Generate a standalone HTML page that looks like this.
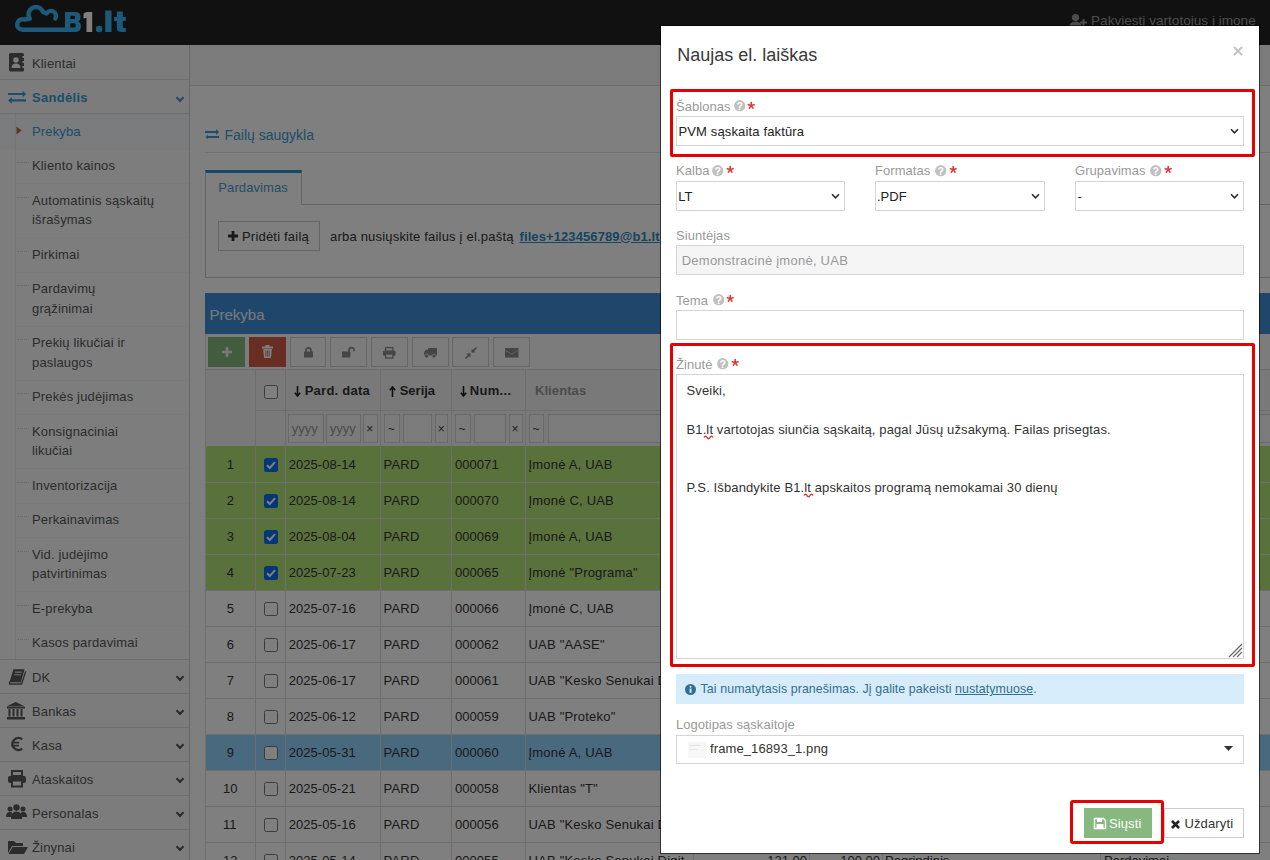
<!DOCTYPE html><html><head><meta charset="utf-8"><title>B1</title><style>
*{box-sizing:border-box;margin:0;padding:0}
html,body{width:1270px;height:860px;overflow:hidden}
body{position:relative;font-family:"Liberation Sans",sans-serif;font-size:13px;color:#393939;background:#fff}
.abs{position:absolute}
.t{position:absolute;white-space:nowrap;line-height:1}
svg{position:absolute;overflow:visible}
#page{position:absolute;left:0;top:0;width:1270px;height:860px;background:#fff;overflow:hidden}
#backdrop{position:absolute;left:0;top:0;width:1270px;height:860px;background:rgba(0,0,0,.5)}
#modal{position:absolute;left:660px;top:25px;width:600px;height:829px;background:#fff;background-clip:padding-box;border:1px solid rgba(0,0,0,.6)}
.q{position:absolute;width:11px;height:11px;border-radius:50%;background:#c2c2c2}
.q:after{content:"?";position:absolute;left:0;top:1px;width:11px;text-align:center;font-size:9px;line-height:9px;font-weight:bold;color:#fff}
.inp{position:absolute;border:1px solid #d5d5d5;background:#fff}
</style></head><body>
<div id="page">
<div class="abs" style="left:0.00px;top:0.00px;width:1270.00px;height:45.00px;background:#222"></div>
<svg style="left:0;top:0" width="140" height="45"><path d="M55.33 18.5 A5 5 0 0 0 46.67 13.5 L43.05 11.93 A7.5 7.5 0 1 0 29.86 18.8 L24.31 19.52 A5.3 5.3 0 1 0 22.5 29.8 L67 29.8" fill="none" stroke="#3ab2f0" stroke-width="4.4" stroke-linecap="round" stroke-linejoin="round"/><path fill-rule="evenodd" fill="#3ab2f0" d="M65 12 H75 Q80.6 12 80.6 17 Q80.6 20.3 78.2 21.6 Q81 22.8 81 26.6 Q81 32 75.4 32 H65 Z M70.4 15.8 H73.6 Q75.2 15.8 75.2 17.4 Q75.2 19 73.6 19 H70.4 Z M70.4 23.2 H74 Q75.8 23.2 75.8 25.4 Q75.8 27.6 74 27.6 H70.4 Z"/><path fill="#fff" d="M86.5 12 H92.2 V32 H86.5 V17.8 L83.5 18.6 V13.6 Z"/><circle cx="99.1" cy="29" r="3.3" fill="#3ab2f0"/><rect x="105.2" y="10.5" width="6.3" height="21.5" fill="#3ab2f0"/><path fill="#3ab2f0" d="M116.8 11.6 H122.8 V16.9 H125.9 V21 H122.8 V26.8 Q122.8 28 124.2 28 H125.9 V32 H121.5 Q116.8 32 116.8 27.5 V21 H114 V16.9 H116.8 Z"/></svg>
<svg style="left:1069px;top:13px" width="18" height="16"><circle cx="6.5" cy="4.5" r="3.6" fill="#999"/><path d="M0 15 Q0 8.5 6.5 8.5 Q13 8.5 13 15Z" fill="#999"/><path d="M14.5 6v7M11 9.5h7" stroke="#999" stroke-width="2"/></svg>
<div class="t" style="left:1091.00px;top:14.09px;font-size:13.6px;color:#9a9a9a;font-weight:normal;">Pakviesti vartotojus į įmonę</div>
<div class="abs" style="left:0.00px;top:45.00px;width:190.00px;height:815.00px;background:#f8f8f8;border-right:1px solid #cfcfcf"></div>
<svg style="left:9px;top:53px" width="16" height="19"><rect x="0" y="0" width="15" height="18.5" rx="1.5" fill="#585858"/><rect x="13.5" y="3" width="2.5" height="2" fill="#f8f8f8"/><rect x="13.5" y="8" width="2.5" height="2" fill="#f8f8f8"/><rect x="13.5" y="13" width="2.5" height="2" fill="#f8f8f8"/><circle cx="7" cy="7" r="2.8" fill="#f8f8f8"/><path d="M2.5 15 Q2.5 10.5 7 10.5 Q11.5 10.5 11.5 15Z" fill="#f8f8f8"/></svg>
<div class="t" style="left:32.00px;top:56.80px;font-size:13px;color:#585858;font-weight:normal;letter-spacing:0.15px">Klientai</div>
<div class="abs" style="left:0.00px;top:79.00px;width:189.00px;height:1.00px;background:#dedede"></div>
<div class="abs" style="left:0.00px;top:80.00px;width:189.00px;height:33.00px;background:#f8f8f8"></div>
<svg style="left:8px;top:90px" width="19" height="15"><path fill="#3a9ad4" d="M0 2.9H14.6V0.7L18.1 4L14.6 7.3V4.9H0Z M18 9.3H3.8V7L0.1 10.4L3.8 13.8V11.5H18Z"/></svg>
<div class="t" style="left:32.00px;top:90.60px;font-size:13px;color:#3a9ad4;font-weight:bold;letter-spacing:0.3px">Sandėlis</div>
<div class="abs" style="left:176.5px;top:94.5px;width:6px;height:6px;border-right:2px solid #3a9ad4;border-bottom:2px solid #3a9ad4;transform:rotate(45deg)"></div>
<div class="abs" style="left:0.00px;top:113.00px;width:189.00px;height:1.00px;background:#dedede"></div>
<div class="abs" style="left:0.00px;top:114.00px;width:189.00px;height:545.00px;background:#fbfbfb"></div>
<div class="abs" style="left:0.00px;top:114.00px;width:189.00px;height:34.50px;background:#f4f7fa"></div>
<div class="t" style="left:32px;top:124.95px;font-size:13px;line-height:19.5px;color:#3a9ad4;letter-spacing:0.15px;top:121.70px">Prekyba</div>
<div class="abs" style="left:16.00px;top:148.50px;width:173.00px;height:1.00px;background:#f4f4f4"></div>
<div class="abs" style="left:17px;top:162.15px;width:12px;height:0;border-top:1px dotted #d0d0d0"></div>
<div class="t" style="left:32px;top:159.45px;font-size:13px;line-height:19.5px;color:#585858;letter-spacing:0.15px;top:156.20px">Kliento kainos</div>
<div class="abs" style="left:16.00px;top:183.00px;width:173.00px;height:1.00px;background:#f4f4f4"></div>
<div class="abs" style="left:17px;top:196.80px;width:12px;height:0;border-top:1px dotted #d0d0d0"></div>
<div class="t" style="left:32px;top:194.10px;font-size:13px;line-height:19.5px;color:#585858;letter-spacing:0.15px;top:190.85px">Automatinis sąskaitų<br>išrašymas</div>
<div class="abs" style="left:16.00px;top:237.00px;width:173.00px;height:1.00px;background:#f4f4f4"></div>
<div class="abs" style="left:17px;top:250.65px;width:12px;height:0;border-top:1px dotted #d0d0d0"></div>
<div class="t" style="left:32px;top:247.95px;font-size:13px;line-height:19.5px;color:#585858;letter-spacing:0.15px;top:244.70px">Pirkimai</div>
<div class="abs" style="left:16.00px;top:271.50px;width:173.00px;height:1.00px;background:#f4f4f4"></div>
<div class="abs" style="left:17px;top:285.30px;width:12px;height:0;border-top:1px dotted #d0d0d0"></div>
<div class="t" style="left:32px;top:282.60px;font-size:13px;line-height:19.5px;color:#585858;letter-spacing:0.15px;top:279.35px">Pardavimų<br>grąžinimai</div>
<div class="abs" style="left:16.00px;top:325.50px;width:173.00px;height:1.00px;background:#f4f4f4"></div>
<div class="abs" style="left:17px;top:339.30px;width:12px;height:0;border-top:1px dotted #d0d0d0"></div>
<div class="t" style="left:32px;top:336.60px;font-size:13px;line-height:19.5px;color:#585858;letter-spacing:0.15px;top:333.35px">Prekių likučiai ir<br>paslaugos</div>
<div class="abs" style="left:16.00px;top:379.50px;width:173.00px;height:1.00px;background:#f4f4f4"></div>
<div class="abs" style="left:17px;top:393.15px;width:12px;height:0;border-top:1px dotted #d0d0d0"></div>
<div class="t" style="left:32px;top:390.45px;font-size:13px;line-height:19.5px;color:#585858;letter-spacing:0.15px;top:387.20px">Prekės judėjimas</div>
<div class="abs" style="left:16.00px;top:414.00px;width:173.00px;height:1.00px;background:#f4f4f4"></div>
<div class="abs" style="left:17px;top:427.80px;width:12px;height:0;border-top:1px dotted #d0d0d0"></div>
<div class="t" style="left:32px;top:425.10px;font-size:13px;line-height:19.5px;color:#585858;letter-spacing:0.15px;top:421.85px">Konsignaciniai<br>likučiai</div>
<div class="abs" style="left:16.00px;top:468.00px;width:173.00px;height:1.00px;background:#f4f4f4"></div>
<div class="abs" style="left:17px;top:481.65px;width:12px;height:0;border-top:1px dotted #d0d0d0"></div>
<div class="t" style="left:32px;top:478.95px;font-size:13px;line-height:19.5px;color:#585858;letter-spacing:0.15px;top:475.70px">Inventorizacija</div>
<div class="abs" style="left:16.00px;top:502.50px;width:173.00px;height:1.00px;background:#f4f4f4"></div>
<div class="abs" style="left:17px;top:516.15px;width:12px;height:0;border-top:1px dotted #d0d0d0"></div>
<div class="t" style="left:32px;top:513.45px;font-size:13px;line-height:19.5px;color:#585858;letter-spacing:0.15px;top:510.20px">Perkainavimas</div>
<div class="abs" style="left:16.00px;top:537.00px;width:173.00px;height:1.00px;background:#f4f4f4"></div>
<div class="abs" style="left:17px;top:550.80px;width:12px;height:0;border-top:1px dotted #d0d0d0"></div>
<div class="t" style="left:32px;top:548.10px;font-size:13px;line-height:19.5px;color:#585858;letter-spacing:0.15px;top:544.85px">Vid. judėjimo<br>patvirtinimas</div>
<div class="abs" style="left:16.00px;top:591.00px;width:173.00px;height:1.00px;background:#f4f4f4"></div>
<div class="abs" style="left:17px;top:604.65px;width:12px;height:0;border-top:1px dotted #d0d0d0"></div>
<div class="t" style="left:32px;top:601.95px;font-size:13px;line-height:19.5px;color:#585858;letter-spacing:0.15px;top:598.70px">E-prekyba</div>
<div class="abs" style="left:16.00px;top:625.50px;width:173.00px;height:1.00px;background:#f4f4f4"></div>
<div class="abs" style="left:17px;top:639.15px;width:12px;height:0;border-top:1px dotted #d0d0d0"></div>
<div class="t" style="left:32px;top:636.45px;font-size:13px;line-height:19.5px;color:#585858;letter-spacing:0.15px;top:633.20px">Kasos pardavimai</div>
<div class="abs" style="left:15px;top:114px;width:0;height:545px;border-left:1px dotted #d3e2ec"></div>
<svg style="left:16px;top:126px" width="6" height="9"><path d="M0.5 0.5 L5.5 4.5 L0.5 8.5Z" fill="#c86139"/></svg>
<div class="abs" style="left:0.00px;top:659.00px;width:189.00px;height:1.00px;background:#dedede"></div>
<div class="t" style="left:32.00px;top:671.00px;font-size:13px;color:#585858;font-weight:normal;letter-spacing:0.15px">DK</div>
<div class="abs" style="left:177px;top:673.80px;width:6px;height:6px;border-right:2px solid #555;border-bottom:2px solid #555;transform:rotate(45deg)"></div>
<div class="abs" style="left:0.00px;top:693.00px;width:189.00px;height:1.00px;background:#dedede"></div>
<div class="t" style="left:32.00px;top:705.00px;font-size:13px;color:#585858;font-weight:normal;letter-spacing:0.15px">Bankas</div>
<div class="abs" style="left:177px;top:707.80px;width:6px;height:6px;border-right:2px solid #555;border-bottom:2px solid #555;transform:rotate(45deg)"></div>
<div class="abs" style="left:0.00px;top:727.00px;width:189.00px;height:1.00px;background:#dedede"></div>
<div class="t" style="left:32.00px;top:739.00px;font-size:13px;color:#585858;font-weight:normal;letter-spacing:0.15px">Kasa</div>
<div class="abs" style="left:177px;top:741.80px;width:6px;height:6px;border-right:2px solid #555;border-bottom:2px solid #555;transform:rotate(45deg)"></div>
<div class="abs" style="left:0.00px;top:761.00px;width:189.00px;height:1.00px;background:#dedede"></div>
<div class="t" style="left:32.00px;top:773.00px;font-size:13px;color:#585858;font-weight:normal;letter-spacing:0.15px">Ataskaitos</div>
<div class="abs" style="left:177px;top:775.80px;width:6px;height:6px;border-right:2px solid #555;border-bottom:2px solid #555;transform:rotate(45deg)"></div>
<div class="abs" style="left:0.00px;top:795.00px;width:189.00px;height:1.00px;background:#dedede"></div>
<div class="t" style="left:32.00px;top:807.00px;font-size:13px;color:#585858;font-weight:normal;letter-spacing:0.15px">Personalas</div>
<div class="abs" style="left:177px;top:809.80px;width:6px;height:6px;border-right:2px solid #555;border-bottom:2px solid #555;transform:rotate(45deg)"></div>
<div class="abs" style="left:0.00px;top:829.00px;width:189.00px;height:1.00px;background:#dedede"></div>
<div class="t" style="left:32.00px;top:841.00px;font-size:13px;color:#585858;font-weight:normal;letter-spacing:0.15px">Žinynai</div>
<div class="abs" style="left:177px;top:843.80px;width:6px;height:6px;border-right:2px solid #555;border-bottom:2px solid #555;transform:rotate(45deg)"></div>
<div class="abs" style="left:0.00px;top:863.00px;width:189.00px;height:1.00px;background:#dedede"></div>
<svg style="left:9px;top:668.5px" width="18" height="16"><path d="M4.4 0.3H15.6L11.9 13.3H0.5Z" fill="#585858"/><path d="M0.6 12.6V15H12.6L16.7 2.4" fill="none" stroke="#585858" stroke-width="1.3"/><path d="M6 3.1H12.6M5.3 5.8H12" stroke="#f8f8f8" stroke-width="1.1" opacity="0.85"/></svg>
<svg style="left:6px;top:702px" width="20" height="18"><path d="M0.5 4.5 L9.75 0 L19 4.5Z" fill="#585858"/><rect x="1" y="5" width="18" height="1.5" fill="#585858"/><rect x="2.5" y="7" width="2" height="7.5" fill="#585858"/><rect x="6.5" y="7" width="2" height="7.5" fill="#585858"/><rect x="10.5" y="7" width="2" height="7.5" fill="#585858"/><rect x="14.5" y="7" width="2" height="7.5" fill="#585858"/><rect x="1" y="15" width="18" height="2.5" fill="#585858"/></svg>
<svg style="left:11px;top:735.5px" width="13" height="16"><path d="M11.2 3.3 A6 6 0 1 0 11.2 12.7" fill="none" stroke="#585858" stroke-width="2.3"/><path d="M0.3 6.6H8.3M0.3 9.6H7.8" stroke="#585858" stroke-width="1.7"/></svg>
<svg style="left:8px;top:771px" width="19" height="16"><rect x="4" y="0" width="10" height="5" fill="none" stroke="#585858" stroke-width="2"/><rect x="0" y="5" width="18" height="7" rx="2" fill="#585858"/><rect x="4" y="9.5" width="10" height="6" fill="#f8f8f8" stroke="#585858" stroke-width="2"/></svg>
<svg style="left:6px;top:804px" width="21" height="16"><circle cx="10.5" cy="3.5" r="3.2" fill="#585858"/><circle cx="4" cy="5" r="2.5" fill="#585858"/><circle cx="17" cy="5" r="2.5" fill="#585858"/><path d="M5 15 Q5 7.5 10.5 7.5 Q16 7.5 16 15Z" fill="#585858"/><path d="M0 13 Q0 8 4 8 Q6 8 6.5 9 L5 13Z" fill="#585858"/><path d="M21 13 Q21 8 17 8 Q15 8 14.5 9 L16 13Z" fill="#585858"/></svg>
<svg style="left:8px;top:840px" width="20" height="15"><path d="M0 1h6l2 2h7v3H4L0 13Z" fill="#585858"/><path d="M4.5 7H20L16 14H0.5Z" fill="#585858"/></svg>
<div class="abs" style="left:190.00px;top:45.00px;width:1080.00px;height:41.00px;background:#f6f6f6;border-bottom:1px solid #d9d9d9"></div>
<svg style="left:205px;top:129px" width="15" height="11"><path fill="#3a9ad4" d="M0 2.1H11.2V0L14 3L11.2 6V3.9H0Z M14 7.1H2.8V5.7L0.5 8L2.8 10.5V8.9H14Z"/></svg>
<div class="t" style="left:224.50px;top:128.15px;font-size:14px;color:#3a9ad4;font-weight:normal;">Failų saugykla</div>
<div class="abs" style="left:205.00px;top:152.00px;width:1065.00px;height:1.00px;background:#e2e2e2"></div>
<div class="abs" style="left:205.00px;top:170.00px;width:97.00px;height:35.00px;background:#fff;border:1px solid #c8c8c8;border-bottom:none;border-top:3px solid #2f8fc4"></div>
<div class="abs" style="left:205.00px;top:204.00px;width:1065.00px;height:74.00px;border:1px solid #c8c8c8;border-right:none"></div>
<div class="abs" style="left:206.00px;top:204.00px;width:95.00px;height:1.00px;background:#fff"></div>
<div class="t" style="left:218.30px;top:180.60px;font-size:13px;color:#4a9ccc;font-weight:normal;letter-spacing:0.1px">Pardavimas</div>
<div class="abs" style="left:218.00px;top:221.00px;width:102.00px;height:30.00px;background:#fff;border:1px solid #ccc"></div>
<svg style="left:228px;top:231px" width="10" height="10"><path d="M5 0v10M0 5h10" stroke="#333" stroke-width="2.8"/></svg>
<div class="t" style="left:242.00px;top:229.50px;font-size:13px;color:#333;font-weight:normal;letter-spacing:0.2px">Pridėti failą</div>
<div class="t" style="left:330.00px;top:229.50px;font-size:13px;color:#333;font-weight:normal;letter-spacing:0.2px">arba nusiųskite failus į el.paštą</div>
<div class="t" style="left:519.50px;top:229.50px;font-size:13px;color:#2e88bd;font-weight:bold;text-decoration:underline;letter-spacing:0.1px">files+123456789@b1.lt</div>
<div class="abs" style="left:205.00px;top:293.00px;width:1065.00px;height:41.00px;background:#3f8fd8"></div>
<div class="t" style="left:209.50px;top:306.70px;font-size:15px;color:#eef4fa;font-weight:normal;">Prekyba</div>
<div class="abs" style="left:205.00px;top:334.00px;width:1065.00px;height:35.00px;background:#f8f8f8;border-left:1px solid #ddd"></div>
<div class="abs" style="left:208.00px;top:337.00px;width:37.00px;height:30.00px;background:#87b87f"></div>
<div class="abs" style="left:249.00px;top:337.00px;width:36.50px;height:30.00px;background:#d15b47"></div>
<svg style="left:222px;top:347px" width="10" height="10"><path d="M5 0v10M0 5h10" stroke="#f0f0f0" stroke-width="2.6"/></svg>
<svg style="left:262px;top:345px" width="11" height="13"><rect x="0" y="1.5" width="11" height="2" fill="#fff"/><rect x="3.5" y="0" width="4" height="2" fill="#fff"/><path d="M1.2 4h8.6l-0.8 9h-7z" fill="#fff"/><path d="M3.8 5.5v6M5.5 5.5v6M7.2 5.5v6" stroke="#d15b47" stroke-width="0.8"/></svg>
<div class="abs" style="left:289.50px;top:337.00px;width:36.50px;height:30.00px;background:#f8f8f8;border:1px solid #ccc"></div>
<div class="abs" style="left:330.00px;top:337.00px;width:36.50px;height:30.00px;background:#f8f8f8;border:1px solid #ccc"></div>
<div class="abs" style="left:371.00px;top:337.00px;width:36.50px;height:30.00px;background:#f8f8f8;border:1px solid #ccc"></div>
<div class="abs" style="left:412.00px;top:337.00px;width:36.50px;height:30.00px;background:#f8f8f8;border:1px solid #ccc"></div>
<div class="abs" style="left:452.00px;top:337.00px;width:36.50px;height:30.00px;background:#f8f8f8;border:1px solid #ccc"></div>
<div class="abs" style="left:493.00px;top:337.00px;width:36.50px;height:30.00px;background:#f8f8f8;border:1px solid #ccc"></div>
<svg style="left:303.5px;top:346.5px" width="9" height="11"><path d="M2 5V3.3a2.5 2.5 0 0 1 5 0V5" fill="none" stroke="#8a8a8a" stroke-width="1.7"/><rect x="0" y="4.6" width="9" height="5.9" rx="0.6" fill="#8a8a8a"/></svg>
<svg style="left:342.3px;top:346.5px" width="13" height="11"><path d="M7 5V3.1a2.55 2.55 0 0 1 5.1 0V4.2" fill="none" stroke="#8a8a8a" stroke-width="1.7"/><rect x="0" y="4.6" width="8.4" height="5.9" rx="0.6" fill="#8a8a8a"/></svg>
<svg style="left:383.2px;top:346.6px" width="13" height="12"><rect x="2.6" y="0.6" width="7.3" height="3.6" fill="none" stroke="#8a8a8a" stroke-width="1.3"/><rect x="0" y="3.8" width="12.5" height="5" rx="1.2" fill="#8a8a8a"/><rect x="2.6" y="7" width="7.3" height="4" fill="#f8f8f8" stroke="#8a8a8a" stroke-width="1.3"/></svg>
<svg style="left:424px;top:347.5px" width="13" height="11"><rect x="4" y="0" width="9" height="7.5" fill="#8a8a8a"/><path d="M0 4.2 L1.8 1.8 H4.2 V7.5 H0Z" fill="#8a8a8a"/><circle cx="2.6" cy="8" r="2" fill="#8a8a8a" stroke="#f8f8f8" stroke-width="0.7"/><circle cx="10" cy="8" r="2" fill="#8a8a8a" stroke="#f8f8f8" stroke-width="0.7"/></svg>
<svg style="left:464.8px;top:346.6px" width="12" height="12"><path d="M11.5 0.5L7.2 4.8M0.5 11.5L4.8 7.2" stroke="#8a8a8a" stroke-width="1.7"/><path d="M6.6 1.4V5.4H10.6Z M5.4 10.6V6.6H1.4Z" fill="#8a8a8a"/></svg>
<svg style="left:504.7px;top:348px" width="14" height="10"><rect x="0" y="0" width="13.5" height="9.6" rx="0.5" fill="#8a8a8a"/><path d="M0.3 2.2 L6.75 6.2 L13.2 2.2" fill="none" stroke="#f8f8f8" stroke-width="0.9" opacity="0.6"/></svg>
<div class="abs" style="left:205.00px;top:369.00px;width:1065.00px;height:77.00px;background:#f2f2f2"></div>
<div class="abs" style="left:205.00px;top:369.00px;width:1065.00px;height:1.00px;background:#ddd"></div>
<div class="abs" style="left:255.00px;top:410.00px;width:1015.00px;height:1.00px;background:#ddd"></div>
<div class="abs" style="left:205.00px;top:446.00px;width:1065.00px;height:36.00px;background:#b2e479"></div>
<div class="t" style="left:226.70px;top:457.60px;font-size:13px;color:#333;font-weight:normal;">1</div>
<div class="t" style="left:288.70px;top:457.60px;font-size:13px;color:#333;font-weight:normal;letter-spacing:0.05px">2025-08-14</div>
<div class="t" style="left:383.60px;top:457.60px;font-size:13px;color:#333;font-weight:normal;letter-spacing:0.2px">PARD</div>
<div class="t" style="left:455.00px;top:457.60px;font-size:13px;color:#333;font-weight:normal;letter-spacing:0.05px">000071</div>
<div class="t" style="left:528.50px;top:457.60px;font-size:13px;color:#333;font-weight:normal;letter-spacing:0.2px">Įmonė A, UAB</div>
<svg style="left:264px;top:457.50px" width="14" height="14"><rect x="0" y="0" width="14" height="14" rx="2.5" fill="#0a6cf0"/><path d="M3 7.2 L5.8 10 L11 4.2" fill="none" stroke="#fff" stroke-width="2"/></svg>
<div class="abs" style="left:205.00px;top:482.00px;width:1065.00px;height:36.00px;background:#b2e479"></div>
<div class="t" style="left:226.70px;top:493.60px;font-size:13px;color:#333;font-weight:normal;">2</div>
<div class="t" style="left:288.70px;top:493.60px;font-size:13px;color:#333;font-weight:normal;letter-spacing:0.05px">2025-08-14</div>
<div class="t" style="left:383.60px;top:493.60px;font-size:13px;color:#333;font-weight:normal;letter-spacing:0.2px">PARD</div>
<div class="t" style="left:455.00px;top:493.60px;font-size:13px;color:#333;font-weight:normal;letter-spacing:0.05px">000070</div>
<div class="t" style="left:528.50px;top:493.60px;font-size:13px;color:#333;font-weight:normal;letter-spacing:0.2px">Įmonė C, UAB</div>
<svg style="left:264px;top:493.50px" width="14" height="14"><rect x="0" y="0" width="14" height="14" rx="2.5" fill="#0a6cf0"/><path d="M3 7.2 L5.8 10 L11 4.2" fill="none" stroke="#fff" stroke-width="2"/></svg>
<div class="abs" style="left:205.00px;top:518.00px;width:1065.00px;height:36.00px;background:#b2e479"></div>
<div class="t" style="left:226.70px;top:529.60px;font-size:13px;color:#333;font-weight:normal;">3</div>
<div class="t" style="left:288.70px;top:529.60px;font-size:13px;color:#333;font-weight:normal;letter-spacing:0.05px">2025-08-04</div>
<div class="t" style="left:383.60px;top:529.60px;font-size:13px;color:#333;font-weight:normal;letter-spacing:0.2px">PARD</div>
<div class="t" style="left:455.00px;top:529.60px;font-size:13px;color:#333;font-weight:normal;letter-spacing:0.05px">000069</div>
<div class="t" style="left:528.50px;top:529.60px;font-size:13px;color:#333;font-weight:normal;letter-spacing:0.2px">Įmonė A, UAB</div>
<svg style="left:264px;top:529.50px" width="14" height="14"><rect x="0" y="0" width="14" height="14" rx="2.5" fill="#0a6cf0"/><path d="M3 7.2 L5.8 10 L11 4.2" fill="none" stroke="#fff" stroke-width="2"/></svg>
<div class="abs" style="left:205.00px;top:554.00px;width:1065.00px;height:36.00px;background:#b2e479"></div>
<div class="t" style="left:226.70px;top:565.60px;font-size:13px;color:#333;font-weight:normal;">4</div>
<div class="t" style="left:288.70px;top:565.60px;font-size:13px;color:#333;font-weight:normal;letter-spacing:0.05px">2025-07-23</div>
<div class="t" style="left:383.60px;top:565.60px;font-size:13px;color:#333;font-weight:normal;letter-spacing:0.2px">PARD</div>
<div class="t" style="left:455.00px;top:565.60px;font-size:13px;color:#333;font-weight:normal;letter-spacing:0.05px">000065</div>
<div class="t" style="left:528.50px;top:565.60px;font-size:13px;color:#333;font-weight:normal;letter-spacing:0.2px">Įmonė "Programa"</div>
<svg style="left:264px;top:565.50px" width="14" height="14"><rect x="0" y="0" width="14" height="14" rx="2.5" fill="#0a6cf0"/><path d="M3 7.2 L5.8 10 L11 4.2" fill="none" stroke="#fff" stroke-width="2"/></svg>
<div class="abs" style="left:205.00px;top:590.00px;width:1065.00px;height:36.00px;background:#fff"></div>
<div class="t" style="left:226.70px;top:601.60px;font-size:13px;color:#333;font-weight:normal;">5</div>
<div class="t" style="left:288.70px;top:601.60px;font-size:13px;color:#333;font-weight:normal;letter-spacing:0.05px">2025-07-16</div>
<div class="t" style="left:383.60px;top:601.60px;font-size:13px;color:#333;font-weight:normal;letter-spacing:0.2px">PARD</div>
<div class="t" style="left:455.00px;top:601.60px;font-size:13px;color:#333;font-weight:normal;letter-spacing:0.05px">000066</div>
<div class="t" style="left:528.50px;top:601.60px;font-size:13px;color:#333;font-weight:normal;letter-spacing:0.2px">Įmonė C, UAB</div>
<svg style="left:264px;top:601.50px" width="14" height="14"><rect x="0.5" y="0.5" width="13" height="13" rx="2" fill="#fff" stroke="#767676" stroke-width="1"/></svg>
<div class="abs" style="left:205.00px;top:626.00px;width:1065.00px;height:36.00px;background:#fff"></div>
<div class="t" style="left:226.70px;top:637.60px;font-size:13px;color:#333;font-weight:normal;">6</div>
<div class="t" style="left:288.70px;top:637.60px;font-size:13px;color:#333;font-weight:normal;letter-spacing:0.05px">2025-06-17</div>
<div class="t" style="left:383.60px;top:637.60px;font-size:13px;color:#333;font-weight:normal;letter-spacing:0.2px">PARD</div>
<div class="t" style="left:455.00px;top:637.60px;font-size:13px;color:#333;font-weight:normal;letter-spacing:0.05px">000062</div>
<div class="t" style="left:528.50px;top:637.60px;font-size:13px;color:#333;font-weight:normal;letter-spacing:0.2px">UAB "AASE"</div>
<svg style="left:264px;top:637.50px" width="14" height="14"><rect x="0.5" y="0.5" width="13" height="13" rx="2" fill="#fff" stroke="#767676" stroke-width="1"/></svg>
<div class="abs" style="left:205.00px;top:662.00px;width:1065.00px;height:36.00px;background:#fff"></div>
<div class="t" style="left:226.70px;top:673.60px;font-size:13px;color:#333;font-weight:normal;">7</div>
<div class="t" style="left:288.70px;top:673.60px;font-size:13px;color:#333;font-weight:normal;letter-spacing:0.05px">2025-06-17</div>
<div class="t" style="left:383.60px;top:673.60px;font-size:13px;color:#333;font-weight:normal;letter-spacing:0.2px">PARD</div>
<div class="t" style="left:455.00px;top:673.60px;font-size:13px;color:#333;font-weight:normal;letter-spacing:0.05px">000061</div>
<div class="t" style="left:528.50px;top:673.60px;font-size:13px;color:#333;font-weight:normal;letter-spacing:0.2px">UAB "Kesko Senukai Digit</div>
<svg style="left:264px;top:673.50px" width="14" height="14"><rect x="0.5" y="0.5" width="13" height="13" rx="2" fill="#fff" stroke="#767676" stroke-width="1"/></svg>
<div class="abs" style="left:205.00px;top:698.00px;width:1065.00px;height:36.00px;background:#fff"></div>
<div class="t" style="left:226.70px;top:709.60px;font-size:13px;color:#333;font-weight:normal;">8</div>
<div class="t" style="left:288.70px;top:709.60px;font-size:13px;color:#333;font-weight:normal;letter-spacing:0.05px">2025-06-12</div>
<div class="t" style="left:383.60px;top:709.60px;font-size:13px;color:#333;font-weight:normal;letter-spacing:0.2px">PARD</div>
<div class="t" style="left:455.00px;top:709.60px;font-size:13px;color:#333;font-weight:normal;letter-spacing:0.05px">000059</div>
<div class="t" style="left:528.50px;top:709.60px;font-size:13px;color:#333;font-weight:normal;letter-spacing:0.2px">UAB "Proteko"</div>
<svg style="left:264px;top:709.50px" width="14" height="14"><rect x="0.5" y="0.5" width="13" height="13" rx="2" fill="#fff" stroke="#767676" stroke-width="1"/></svg>
<div class="abs" style="left:205.00px;top:734.00px;width:1065.00px;height:36.00px;background:#93d2ff"></div>
<div class="t" style="left:226.70px;top:745.60px;font-size:13px;color:#333;font-weight:normal;">9</div>
<div class="t" style="left:288.70px;top:745.60px;font-size:13px;color:#333;font-weight:normal;letter-spacing:0.05px">2025-05-31</div>
<div class="t" style="left:383.60px;top:745.60px;font-size:13px;color:#333;font-weight:normal;letter-spacing:0.2px">PARD</div>
<div class="t" style="left:455.00px;top:745.60px;font-size:13px;color:#333;font-weight:normal;letter-spacing:0.05px">000060</div>
<div class="t" style="left:528.50px;top:745.60px;font-size:13px;color:#333;font-weight:normal;letter-spacing:0.2px">Įmonė A, UAB</div>
<svg style="left:264px;top:745.50px" width="14" height="14"><rect x="0.5" y="0.5" width="13" height="13" rx="2" fill="#fff" stroke="#767676" stroke-width="1"/></svg>
<div class="abs" style="left:205.00px;top:770.00px;width:1065.00px;height:36.00px;background:#fff"></div>
<div class="t" style="left:223.10px;top:781.60px;font-size:13px;color:#333;font-weight:normal;">10</div>
<div class="t" style="left:288.70px;top:781.60px;font-size:13px;color:#333;font-weight:normal;letter-spacing:0.05px">2025-05-21</div>
<div class="t" style="left:383.60px;top:781.60px;font-size:13px;color:#333;font-weight:normal;letter-spacing:0.2px">PARD</div>
<div class="t" style="left:455.00px;top:781.60px;font-size:13px;color:#333;font-weight:normal;letter-spacing:0.05px">000058</div>
<div class="t" style="left:528.50px;top:781.60px;font-size:13px;color:#333;font-weight:normal;letter-spacing:0.2px">Klientas "T"</div>
<svg style="left:264px;top:781.50px" width="14" height="14"><rect x="0.5" y="0.5" width="13" height="13" rx="2" fill="#fff" stroke="#767676" stroke-width="1"/></svg>
<div class="abs" style="left:205.00px;top:806.00px;width:1065.00px;height:36.00px;background:#fff"></div>
<div class="t" style="left:223.10px;top:817.60px;font-size:13px;color:#333;font-weight:normal;">11</div>
<div class="t" style="left:288.70px;top:817.60px;font-size:13px;color:#333;font-weight:normal;letter-spacing:0.05px">2025-05-16</div>
<div class="t" style="left:383.60px;top:817.60px;font-size:13px;color:#333;font-weight:normal;letter-spacing:0.2px">PARD</div>
<div class="t" style="left:455.00px;top:817.60px;font-size:13px;color:#333;font-weight:normal;letter-spacing:0.05px">000056</div>
<div class="t" style="left:528.50px;top:817.60px;font-size:13px;color:#333;font-weight:normal;letter-spacing:0.2px">UAB "Kesko Senukai Digit</div>
<svg style="left:264px;top:817.50px" width="14" height="14"><rect x="0.5" y="0.5" width="13" height="13" rx="2" fill="#fff" stroke="#767676" stroke-width="1"/></svg>
<div class="abs" style="left:205.00px;top:842.00px;width:1065.00px;height:36.00px;background:#fff"></div>
<div class="t" style="left:223.10px;top:853.60px;font-size:13px;color:#333;font-weight:normal;">12</div>
<div class="t" style="left:288.70px;top:853.60px;font-size:13px;color:#333;font-weight:normal;letter-spacing:0.05px">2025-05-14</div>
<div class="t" style="left:383.60px;top:853.60px;font-size:13px;color:#333;font-weight:normal;letter-spacing:0.2px">PARD</div>
<div class="t" style="left:455.00px;top:853.60px;font-size:13px;color:#333;font-weight:normal;letter-spacing:0.05px">000055</div>
<div class="t" style="left:528.50px;top:853.60px;font-size:13px;color:#333;font-weight:normal;letter-spacing:0.2px">UAB "Kesko Senukai Digit</div>
<svg style="left:264px;top:853.50px" width="14" height="14"><rect x="0.5" y="0.5" width="13" height="13" rx="2" fill="#fff" stroke="#767676" stroke-width="1"/></svg>
<div class="abs" style="left:205.00px;top:481.50px;width:1065.00px;height:1.00px;background:#ddd"></div>
<div class="abs" style="left:205.00px;top:517.50px;width:1065.00px;height:1.00px;background:#ddd"></div>
<div class="abs" style="left:205.00px;top:553.50px;width:1065.00px;height:1.00px;background:#ddd"></div>
<div class="abs" style="left:205.00px;top:589.50px;width:1065.00px;height:1.00px;background:#ddd"></div>
<div class="abs" style="left:205.00px;top:625.50px;width:1065.00px;height:1.00px;background:#ddd"></div>
<div class="abs" style="left:205.00px;top:661.50px;width:1065.00px;height:1.00px;background:#ddd"></div>
<div class="abs" style="left:205.00px;top:697.50px;width:1065.00px;height:1.00px;background:#ddd"></div>
<div class="abs" style="left:205.00px;top:733.50px;width:1065.00px;height:1.00px;background:#ddd"></div>
<div class="abs" style="left:205.00px;top:769.50px;width:1065.00px;height:1.00px;background:#ddd"></div>
<div class="abs" style="left:205.00px;top:805.50px;width:1065.00px;height:1.00px;background:#ddd"></div>
<div class="abs" style="left:205.00px;top:841.50px;width:1065.00px;height:1.00px;background:#ddd"></div>
<div class="abs" style="left:205.00px;top:877.50px;width:1065.00px;height:1.00px;background:#ddd"></div>
<div class="t" style="left:700px;width:107px;text-align:right;top:853.6px;font-size:13px;color:#333">121,00</div>
<div class="t" style="left:780px;width:100px;text-align:right;top:853.6px;font-size:13px;color:#333">100,00</div>
<div class="t" style="left:885.00px;top:853.60px;font-size:13px;color:#333;font-weight:normal;">Pagrindinis</div>
<div class="t" style="left:1104.00px;top:853.60px;font-size:13px;color:#333;font-weight:normal;">Pardavimai</div>
<div class="abs" style="left:205.00px;top:369.00px;width:1.00px;height:491.00px;background:#ddd"></div>
<div class="abs" style="left:254.50px;top:369.00px;width:1.00px;height:491.00px;background:#ddd"></div>
<div class="abs" style="left:285.00px;top:369.00px;width:1.00px;height:491.00px;background:#ddd"></div>
<div class="abs" style="left:380.00px;top:369.00px;width:1.00px;height:491.00px;background:#ddd"></div>
<div class="abs" style="left:451.00px;top:369.00px;width:1.00px;height:491.00px;background:#ddd"></div>
<div class="abs" style="left:524.80px;top:369.00px;width:1.00px;height:491.00px;background:#ddd"></div>
<div class="abs" style="left:693.10px;top:369.00px;width:1.00px;height:491.00px;background:#ddd"></div>
<div class="abs" style="left:809.30px;top:369.00px;width:1.00px;height:491.00px;background:#ddd"></div>
<div class="abs" style="left:882.00px;top:369.00px;width:1.00px;height:491.00px;background:#ddd"></div>
<div class="abs" style="left:1100.30px;top:369.00px;width:1.00px;height:491.00px;background:#ddd"></div>
<svg style="left:264px;top:385px" width="14" height="14"><rect x="0.5" y="0.5" width="13" height="13" rx="2" fill="#fff" stroke="#767676" stroke-width="1"/></svg>
<svg style="left:294px;top:386px" width="7" height="11"><path d="M3.5 0V9.5M0.8 6.8 L3.5 10 L6.2 6.8" fill="none" stroke="#222" stroke-width="1.6"/></svg>
<div class="t" style="left:304.70px;top:384.20px;font-size:13px;color:#333;font-weight:bold;letter-spacing:0.25px">Pard. data</div>
<svg style="left:389px;top:386px" width="7" height="11"><path d="M3.5 11V1.5M0.8 4.2 L3.5 1 L6.2 4.2" fill="none" stroke="#222" stroke-width="1.6"/></svg>
<div class="t" style="left:399.70px;top:384.20px;font-size:13px;color:#333;font-weight:bold;">Serija</div>
<svg style="left:459.5px;top:386px" width="7" height="11"><path d="M3.5 0V9.5M0.8 6.8 L3.5 10 L6.2 6.8" fill="none" stroke="#222" stroke-width="1.6"/></svg>
<div class="t" style="left:469.80px;top:384.20px;font-size:13px;color:#333;font-weight:bold;letter-spacing:0.3px">Num...</div>
<div class="t" style="left:534.90px;top:384.20px;font-size:13px;color:#999;font-weight:bold;letter-spacing:0.1px">Klientas</div>
<div class="abs" style="left:288.20px;top:413.50px;width:35.40px;height:29.00px;background:#f6f6f6;border:1px solid #d5d5d5"></div>
<div class="t" style="left:291.70px;top:422.00px;font-size:13px;color:#999;font-weight:normal;">yyyy</div>
<div class="abs" style="left:326.30px;top:413.50px;width:34.30px;height:29.00px;background:#f6f6f6;border:1px solid #d5d5d5"></div>
<div class="t" style="left:329.80px;top:422.00px;font-size:13px;color:#999;font-weight:normal;">yyyy</div>
<div class="abs" style="left:363.30px;top:413.50px;width:14.70px;height:29.00px;background:#f6f6f6;border:1px solid #d5d5d5"></div>
<div class="t" style="left:366.30px;top:422.84px;font-size:12px;color:#444;font-weight:normal;">×</div>
<div class="abs" style="left:383.70px;top:413.50px;width:16.00px;height:29.00px;background:#f6f6f6;border:1px solid #d5d5d5"></div>
<div class="t" style="left:387.70px;top:422.84px;font-size:12px;color:#444;font-weight:normal;">~</div>
<div class="abs" style="left:402.90px;top:413.50px;width:28.70px;height:29.00px;background:#f6f6f6;border:1px solid #d5d5d5"></div>
<div class="abs" style="left:434.80px;top:413.50px;width:13.70px;height:29.00px;background:#f6f6f6;border:1px solid #d5d5d5"></div>
<div class="t" style="left:437.80px;top:422.84px;font-size:12px;color:#444;font-weight:normal;">×</div>
<div class="abs" style="left:454.50px;top:413.50px;width:16.00px;height:29.00px;background:#f6f6f6;border:1px solid #d5d5d5"></div>
<div class="t" style="left:458.50px;top:422.84px;font-size:12px;color:#444;font-weight:normal;">~</div>
<div class="abs" style="left:473.70px;top:413.50px;width:31.90px;height:29.00px;background:#f6f6f6;border:1px solid #d5d5d5"></div>
<div class="abs" style="left:508.60px;top:413.50px;width:14.10px;height:29.00px;background:#f6f6f6;border:1px solid #d5d5d5"></div>
<div class="t" style="left:511.60px;top:422.84px;font-size:12px;color:#444;font-weight:normal;">×</div>
<div class="abs" style="left:528.50px;top:413.50px;width:15.90px;height:29.00px;background:#f6f6f6;border:1px solid #d5d5d5"></div>
<div class="t" style="left:532.50px;top:422.84px;font-size:12px;color:#444;font-weight:normal;">~</div>
<div class="abs" style="left:547.60px;top:413.50px;width:742.40px;height:29.00px;background:#f6f6f6;border:1px solid #d5d5d5"></div>
</div>
<div id="backdrop"></div>
<div id="modal">
<div class="t" style="left:16.30px;top:19.56px;font-size:18px;color:#393939;font-weight:normal;">Naujas el. laiškas</div>
<svg style="left:572.00px;top:20.00px" width="10" height="10"><path d="M1 1L9 9M9 1L1 9" stroke="#c3c3c3" stroke-width="2"/></svg>
<div class="abs" style="left:9.00px;top:62.50px;width:585.00px;height:68.00px;border:3px solid #e60000;border-radius:2px"></div>
<div class="t" style="left:15.00px;top:73.70px;font-size:13px;color:#9a9a9a;font-weight:normal;letter-spacing:0.05px">Šablonas</div>
<svg style="left:72.50px;top:74.40px" width="11.4" height="11.4"><circle cx="5.7" cy="5.7" r="5.6" fill="#c0c0c0"/><text x="5.8" y="9.6" text-anchor="middle" font-family="Liberation Sans" font-weight="bold" font-size="10.5" fill="#fff">?</text></svg>
<svg style="left:86.80px;top:75.80px" width="7" height="7"><path d="M3.20 3.60L3.20 0.60M3.20 3.60L6.05 2.67M3.20 3.60L4.96 6.03M3.20 3.60L1.44 6.03M3.20 3.60L0.35 2.67" stroke="#dd3b33" stroke-width="1.6" stroke-linecap="round"/></svg>
<div class="abs" style="left:15.00px;top:90.00px;width:568.00px;height:30.00px;border:1px solid #d5d5d5;background:#fff"></div>
<div class="t" style="left:17.40px;top:99.00px;font-size:13px;color:#222;font-weight:normal;letter-spacing:0.15px">PVM sąskaita faktūra</div>
<svg style="left:568.50px;top:101.70px" width="9" height="7"><path d="M1 1.2L4.5 4.8L8 1.2" fill="none" stroke="#2a2a2a" stroke-width="1.5"/></svg>
<div class="t" style="left:15.00px;top:138.40px;font-size:13px;color:#9a9a9a;font-weight:normal;letter-spacing:0.05px">Kalba</div>
<svg style="left:51.40px;top:138.90px" width="11.4" height="11.4"><circle cx="5.7" cy="5.7" r="5.6" fill="#c0c0c0"/><text x="5.8" y="9.6" text-anchor="middle" font-family="Liberation Sans" font-weight="bold" font-size="10.5" fill="#fff">?</text></svg>
<svg style="left:65.80px;top:140.30px" width="7" height="7"><path d="M3.20 3.60L3.20 0.60M3.20 3.60L6.05 2.67M3.20 3.60L4.96 6.03M3.20 3.60L1.44 6.03M3.20 3.60L0.35 2.67" stroke="#dd3b33" stroke-width="1.6" stroke-linecap="round"/></svg>
<div class="t" style="left:214.00px;top:138.40px;font-size:13px;color:#9a9a9a;font-weight:normal;letter-spacing:0.05px">Formatas</div>
<svg style="left:274.20px;top:138.90px" width="11.4" height="11.4"><circle cx="5.7" cy="5.7" r="5.6" fill="#c0c0c0"/><text x="5.8" y="9.6" text-anchor="middle" font-family="Liberation Sans" font-weight="bold" font-size="10.5" fill="#fff">?</text></svg>
<svg style="left:288.60px;top:140.30px" width="7" height="7"><path d="M3.20 3.60L3.20 0.60M3.20 3.60L6.05 2.67M3.20 3.60L4.96 6.03M3.20 3.60L1.44 6.03M3.20 3.60L0.35 2.67" stroke="#dd3b33" stroke-width="1.6" stroke-linecap="round"/></svg>
<div class="t" style="left:414.00px;top:138.40px;font-size:13px;color:#9a9a9a;font-weight:normal;letter-spacing:0.05px">Grupavimas</div>
<svg style="left:489.40px;top:138.90px" width="11.4" height="11.4"><circle cx="5.7" cy="5.7" r="5.6" fill="#c0c0c0"/><text x="5.8" y="9.6" text-anchor="middle" font-family="Liberation Sans" font-weight="bold" font-size="10.5" fill="#fff">?</text></svg>
<svg style="left:503.80px;top:140.30px" width="7" height="7"><path d="M3.20 3.60L3.20 0.60M3.20 3.60L6.05 2.67M3.20 3.60L4.96 6.03M3.20 3.60L1.44 6.03M3.20 3.60L0.35 2.67" stroke="#dd3b33" stroke-width="1.6" stroke-linecap="round"/></svg>
<div class="abs" style="left:15.00px;top:155.00px;width:169.00px;height:30.00px;border:1px solid #d5d5d5;background:#fff"></div>
<div class="abs" style="left:214.00px;top:155.00px;width:169.50px;height:30.00px;border:1px solid #d5d5d5;background:#fff"></div>
<div class="abs" style="left:414.00px;top:155.00px;width:169.00px;height:30.00px;border:1px solid #d5d5d5;background:#fff"></div>
<div class="t" style="left:17.30px;top:164.00px;font-size:13px;color:#222;font-weight:normal;">LT</div>
<div class="t" style="left:216.00px;top:164.00px;font-size:13px;color:#222;font-weight:normal;">.PDF</div>
<div class="t" style="left:416.50px;top:164.00px;font-size:13px;color:#222;font-weight:normal;">-</div>
<svg style="left:169.50px;top:166.70px" width="9" height="7"><path d="M1 1.2L4.5 4.8L8 1.2" fill="none" stroke="#2a2a2a" stroke-width="1.5"/></svg>
<svg style="left:369.50px;top:166.70px" width="9" height="7"><path d="M1 1.2L4.5 4.8L8 1.2" fill="none" stroke="#2a2a2a" stroke-width="1.5"/></svg>
<svg style="left:568.50px;top:166.70px" width="9" height="7"><path d="M1 1.2L4.5 4.8L8 1.2" fill="none" stroke="#2a2a2a" stroke-width="1.5"/></svg>
<div class="t" style="left:15.00px;top:202.50px;font-size:13px;color:#9a9a9a;font-weight:normal;letter-spacing:0.05px">Siuntėjas</div>
<div class="abs" style="left:15.00px;top:219.00px;width:568.00px;height:29.50px;border:1px solid #d5d5d5;background:#f5f5f5"></div>
<div class="t" style="left:20.70px;top:227.60px;font-size:13px;color:#999;font-weight:normal;letter-spacing:0.25px">Demonstracinė įmonė, UAB</div>
<div class="t" style="left:15.00px;top:267.60px;font-size:13px;color:#9a9a9a;font-weight:normal;letter-spacing:0.05px">Tema</div>
<svg style="left:51.50px;top:267.90px" width="11.4" height="11.4"><circle cx="5.7" cy="5.7" r="5.6" fill="#c0c0c0"/><text x="5.8" y="9.6" text-anchor="middle" font-family="Liberation Sans" font-weight="bold" font-size="10.5" fill="#fff">?</text></svg>
<svg style="left:65.80px;top:269.30px" width="7" height="7"><path d="M3.20 3.60L3.20 0.60M3.20 3.60L6.05 2.67M3.20 3.60L4.96 6.03M3.20 3.60L1.44 6.03M3.20 3.60L0.35 2.67" stroke="#dd3b33" stroke-width="1.6" stroke-linecap="round"/></svg>
<div class="abs" style="left:15.00px;top:284.00px;width:568.00px;height:29.50px;border:1px solid #d5d5d5;background:#fff"></div>
<div class="abs" style="left:9.00px;top:317.30px;width:585.00px;height:323.90px;border:3px solid #e60000;border-radius:2px"></div>
<div class="t" style="left:15.00px;top:331.50px;font-size:13px;color:#9a9a9a;font-weight:normal;letter-spacing:0.05px">Žinutė</div>
<svg style="left:56.30px;top:331.90px" width="11.4" height="11.4"><circle cx="5.7" cy="5.7" r="5.6" fill="#c0c0c0"/><text x="5.8" y="9.6" text-anchor="middle" font-family="Liberation Sans" font-weight="bold" font-size="10.5" fill="#fff">?</text></svg>
<svg style="left:70.80px;top:333.30px" width="7" height="7"><path d="M3.20 3.60L3.20 0.60M3.20 3.60L6.05 2.67M3.20 3.60L4.96 6.03M3.20 3.60L1.44 6.03M3.20 3.60L0.35 2.67" stroke="#dd3b33" stroke-width="1.6" stroke-linecap="round"/></svg>
<div class="abs" style="left:15.00px;top:348.00px;width:568.00px;height:284.50px;border:1px solid #d5d5d5;background:#fff"></div>
<div class="t" style="left:25.50px;top:357.70px;font-size:13px;color:#333;font-weight:normal;letter-spacing:0.15px">Sveiki,</div>
<div class="t" style="left:25.50px;top:396.70px;font-size:13px;color:#333;font-weight:normal;letter-spacing:0.12px">B1.lt vartotojas siunčia sąskaitą, pagal Jūsų užsakymą. Failas prisegtas.</div>
<div class="t" style="left:25.50px;top:455.10px;font-size:13px;color:#333;font-weight:normal;letter-spacing:0.12px">P.S. Išbandykite B1.lt apskaitos programą nemokamai 30 dienų</div>
<svg style="left:43.30px;top:408.80px" width="9" height="4"><path d="M0 2.5 Q1.5 -0.3 3 2.5 T6 2.5 T9 2.5" fill="none" stroke="#d22" stroke-width="1.3"/></svg>
<svg style="left:142.50px;top:467.20px" width="9" height="4"><path d="M0 2.5 Q1.5 -0.3 3 2.5 T6 2.5 T9 2.5" fill="none" stroke="#d22" stroke-width="1.3"/></svg>
<svg style="left:566.50px;top:616.50px" width="15" height="15"><path d="M14 1L1 14M14 5L5 14M14 9L9 14" stroke="#6a6a6a" stroke-width="1.3"/></svg>
<div class="abs" style="left:15.00px;top:648.40px;width:568.00px;height:29.30px;background:#d7ecfa"></div>
<svg style="left:23.50px;top:657.50px" width="11" height="11"><circle cx="5.5" cy="5.5" r="5.5" fill="#31708f"/><rect x="4.6" y="4.5" width="1.9" height="4.3" fill="#d9edf7"/><circle cx="5.55" cy="2.8" r="1" fill="#d9edf7"/></svg>
<div class="t" style="left:39.60px;top:657.40px;font-size:12.4px;color:#31708f;font-weight:normal;letter-spacing:0.08px">Tai numatytasis pranešimas. Jį galite pakeisti <span style="text-decoration:underline">nustatymuose</span>.</div>
<div class="t" style="left:15.00px;top:691.80px;font-size:13px;color:#9a9a9a;font-weight:normal;letter-spacing:0.05px">Logotipas sąskaitoje</div>
<div class="abs" style="left:15.00px;top:708.50px;width:568.00px;height:29.30px;border:1px solid #d5d5d5;background:#fff"></div>
<div class="abs" style="left:27.00px;top:716.00px;width:18.00px;height:16.00px;background:#f7f7f7"></div>
<div class="abs" style="left:28.00px;top:719.00px;width:11.00px;height:1.00px;background:#e2e2e2"></div>
<div class="abs" style="left:28.00px;top:723.00px;width:9.00px;height:1.00px;background:#e6e6e6"></div>
<div class="t" style="left:49.00px;top:716.40px;font-size:13px;color:#333;font-weight:normal;letter-spacing:0.1px">frame_16893_1.png</div>
<svg style="left:563.00px;top:720.00px" width="9" height="5"><path d="M0 0H9L4.5 5Z" fill="#333"/></svg>
<div class="abs" style="left:408.80px;top:774.20px;width:93.80px;height:44.10px;border:3px solid #e60000;border-radius:3px"></div>
<div class="abs" style="left:423.00px;top:782.00px;width:68.00px;height:30.00px;background:#87b87f"></div>
<svg style="left:433.00px;top:792.00px" width="12" height="11"><path d="M0.5 0.5H9.5L11.5 2.5V10.5H0.5Z" fill="none" stroke="#fff" stroke-width="1.4"/><rect x="3" y="1" width="5" height="3" fill="#fff"/><rect x="2.5" y="6" width="7" height="4" fill="#fff"/></svg>
<div class="t" style="left:448.00px;top:790.80px;font-size:13px;color:#fff;font-weight:normal;letter-spacing:0.1px">Siųsti</div>
<div class="abs" style="left:503.40px;top:782.00px;width:79.60px;height:30.00px;border:1px solid #ccc;background:#fff"></div>
<svg style="left:509.50px;top:793.50px" width="9" height="9"><path d="M1 1L8 8M8 1L1 8" stroke="#222" stroke-width="2.6"/></svg>
<div class="t" style="left:523.40px;top:790.80px;font-size:13px;color:#333;font-weight:normal;letter-spacing:0.15px">Uždaryti</div>
</div>
</body></html>
